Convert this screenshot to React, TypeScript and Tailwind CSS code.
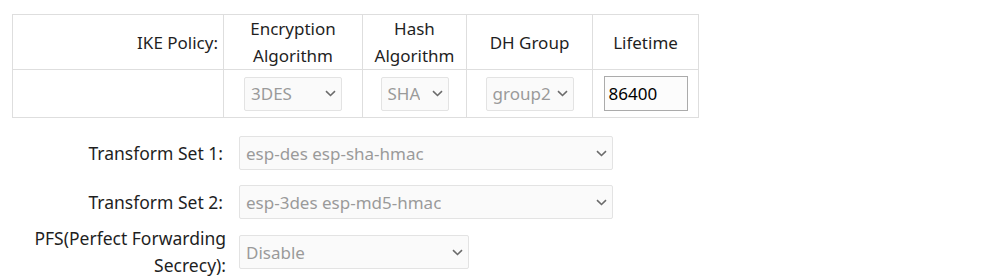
import React from "react";

const Chevron = () => (
  <svg width="11" height="7" viewBox="0 0 11 7" className="shrink-0">
    <path d="M1 1.2 L5.5 5.5 L10 1.2" fill="none" stroke="#6b6b6b" strokeWidth="1.6" />
  </svg>
);

const Sel = ({ value, w }: { value: string; w: string }) => (
  <div
    className={`${w} h-[34px] flex items-center justify-between pl-[6px] pr-[5px] border border-[#e3e3e3] rounded-[2px] bg-[#fafafa] text-[#9a9a9a]`}
  >
    <span className="whitespace-nowrap overflow-hidden">{value}</span>
    <Chevron />
  </div>
);

export default function App() {
  return (
    <div
      className="pl-[12px] pt-[14px] bg-white text-[17px] leading-[27px] text-[#1f1f1f] w-[987px] h-[276px] overflow-hidden"
      style={{ fontFamily: '"Noto Sans", "Open Sans", sans-serif' }}
    >
      <table className="border-collapse">
        <tbody>
          <tr className="h-[53px]">
            <td className="w-[211px] border border-[#dedede] text-right pr-[5px]">IKE Policy:</td>
            <td className="w-[139px] border border-[#dedede] text-center">
              Encryption
              <br />
              Algorithm
            </td>
            <td className="w-[104px] border border-[#dedede] text-center">
              Hash
              <br />
              Algorithm
            </td>
            <td className="w-[126px] border border-[#dedede] text-center">DH Group</td>
            <td className="w-[106px] border border-[#dedede] text-center">Lifetime</td>
          </tr>
          <tr className="h-[48px]">
            <td className="border border-[#dedede]"></td>
            <td className="border border-[#dedede]">
              <div className="flex justify-center">
                <Sel value="3DES" w="w-[98px]" />
              </div>
            </td>
            <td className="border border-[#dedede]">
              <div className="flex justify-center">
                <Sel value="SHA" w="w-[68px]" />
              </div>
            </td>
            <td className="border border-[#dedede]">
              <div className="flex justify-center">
                <Sel value="group2" w="w-[88px]" />
              </div>
            </td>
            <td className="border border-[#dedede]">
              <div className="flex justify-center">
                <div className="w-[84px] h-[35px] border border-[#ababab] bg-[#fcfcfc] pl-[4px] flex items-center text-black">
                  86400
                </div>
              </div>
            </td>
          </tr>
        </tbody>
      </table>

      <div className="mt-[18px] flex flex-col gap-[15px]">
        <div className="flex items-center gap-[16px]">
          <div className="w-[211px] text-right text-[17.5px]">Transform Set 1:</div>
          <Sel value="esp-des esp-sha-hmac" w="w-[374px]" />
        </div>
        <div className="flex items-center gap-[16px]">
          <div className="w-[211px] text-right text-[17.5px]">Transform Set 2:</div>
          <Sel value="esp-3des esp-md5-hmac" w="w-[374px]" />
        </div>
        <div className="flex items-center gap-[13px] -mt-[9px]">
          <div className="w-[214px] text-right text-[17.5px]">
            PFS(Perfect Forwarding
            <br />
            Secrecy):
          </div>
          <Sel value="Disable" w="w-[230px]" />
        </div>
      </div>
    </div>
  );
}
